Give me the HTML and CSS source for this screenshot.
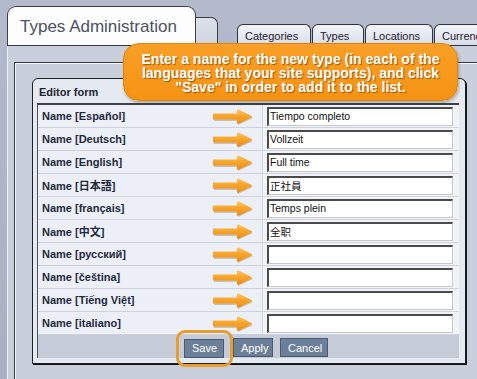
FILE: index.html
```html
<!DOCTYPE html>
<html>
<head>
<meta charset="utf-8">
<link rel="stylesheet" href="styles.css">
</head>
<body>
<svg class="defs" width="0" height="0" aria-hidden="true">
  <defs>
    <linearGradient id="ag" x1="0" y1="0" x2="0" y2="1">
      <stop offset="0" stop-color="#fdc564"/>
      <stop offset="0.45" stop-color="#f7a52c"/>
      <stop offset="1" stop-color="#ec8c0e"/>
    </linearGradient>
    <symbol id="arrow" viewBox="0 0 42 18">
      <path d="M2 7 H26 V3 L41 10 L26 17 V13 H2 Z" fill="#7d6f5a" opacity="0.35"/>
      <path d="M1 5.5 H25 V2 Q25.5 1 26.8 1.6 L39.4 8 Q40.6 8.7 39.4 9.4 L26.8 15.6 Q25.5 16.2 25 15.2 V11.5 H1 Z" fill="url(#ag)"/>
    </symbol>
  </defs>
</svg>
<div class="wrap">
  <div class="tabbar">
    <div class="tab-main">Types Administration</div>
    <div class="tab-blank"></div>
    <div class="tab t-cat">Categories</div>
    <div class="tab t-typ">Types</div>
    <div class="tab t-loc">Locations</div>
    <div class="tab t-cur">Currencies</div>
  </div>
  <div class="panel">
    <div class="outer">
      <div class="editor">
        <div class="editor-head">Editor form</div>
        <div class="grid">
          <div class="row"><div class="lbl"><span>Name [Español]</span><svg class="arr"><use href="#arrow"/></svg></div><div class="val"><div class="inp">Tiempo completo</div></div></div>
          <div class="row"><div class="lbl"><span>Name [Deutsch]</span><svg class="arr"><use href="#arrow"/></svg></div><div class="val"><div class="inp">Vollzeit</div></div></div>
          <div class="row"><div class="lbl"><span>Name [English]</span><svg class="arr"><use href="#arrow"/></svg></div><div class="val"><div class="inp">Full time</div></div></div>
          <div class="row"><div class="lbl"><span>Name [日本語]</span><svg class="arr"><use href="#arrow"/></svg></div><div class="val"><div class="inp cjk">正社員</div></div></div>
          <div class="row"><div class="lbl"><span>Name [français]</span><svg class="arr"><use href="#arrow"/></svg></div><div class="val"><div class="inp">Temps plein</div></div></div>
          <div class="row"><div class="lbl"><span>Name [中文]</span><svg class="arr"><use href="#arrow"/></svg></div><div class="val"><div class="inp cjk sc">全职</div></div></div>
          <div class="row"><div class="lbl"><span>Name [русский]</span><svg class="arr"><use href="#arrow"/></svg></div><div class="val"><div class="inp"></div></div></div>
          <div class="row"><div class="lbl"><span>Name [čeština]</span><svg class="arr"><use href="#arrow"/></svg></div><div class="val"><div class="inp"></div></div></div>
          <div class="row"><div class="lbl"><span>Name [Tiếng Việt]</span><svg class="arr"><use href="#arrow"/></svg></div><div class="val"><div class="inp"></div></div></div>
          <div class="row"><div class="lbl"><span>Name [italiano]</span><svg class="arr"><use href="#arrow"/></svg></div><div class="val"><div class="inp"></div></div></div>
          <div class="btnrow">
            <div class="save-wrap"><button class="btn b-save">Save</button><div class="ring"></div></div>
            <button class="btn b-apply">Apply</button>
            <button class="btn b-cancel">Cancel</button>
          </div>
        </div>
      </div>
    </div>
  </div>
  <div class="callout">Enter a name for the new type (in each of the languages that your site supports), and click "Save" in order to add it to the list.</div>
</div>
</body>
</html>
```
FILE: styles.css
```css
* { box-sizing: border-box; }
html, body { margin: 0; padding: 0; }
body {
  background: linear-gradient(#b3bacb, #a9b0c3);
  font-family: "Liberation Sans", "Noto Sans CJK JP", sans-serif;
  width: 477px;
  height: 379px;
  overflow: hidden;
}
.defs { position: absolute; width: 0; height: 0; }
.wrap {
  position: relative;
  padding: 6px 0 0 7px;
  height: 379px;
  width: 700px;
}
.tabbar {
  display: flex;
  align-items: flex-end;
  height: 40px;
  border-bottom: 1px solid #2f3440;
}
.tab-main {
  width: 189px;
  height: 39px;
  background: #fdfdfe;
  border: 1px solid #3a3f4b;
  border-bottom: none;
  border-radius: 9px 9px 0 0;
  font-size: 17px;
  line-height: 20px;
  padding: 10px 0 0 12px;
  color: #4b5262;
}
.tab-blank {
  width: 22px;
  height: 28px;
  background: linear-gradient(#dde1ea, #cfd4df);
  border: 1px solid #3a3f4b;
  border-left: none;
  border-bottom: none;
  border-radius: 0 7px 0 0;
  margin-right: 19px;
}
.tab {
  height: 21px;
  background: linear-gradient(#f1f3f9, #d9dee9);
  border: 1px solid #30343e;
  border-bottom: none;
  border-radius: 6px 6px 0 0;
  font-size: 11px;
  line-height: 17px;
  padding: 3px 0 0 7px;
  color: #1e2230;
  margin-right: 1px;
  white-space: nowrap;
}
.t-cat { width: 74px; }
.t-typ { width: 52px; }
.t-loc { width: 68px; }
.t-cur { width: 80px; }

.panel {
  background: #c9cfdb;
  border-left: 1px solid #eef1f6;
  padding: 16px 0 0 6px;
  height: 340px;
}
.outer {
  border: 1px solid #353a45;
  border-right: none;
  box-shadow: inset 1px 1px 0 #f4f6fa;
  padding: 15px 0 0 17px;
  height: 340px;
}
.editor {
  width: 434px;
  background: #e5e9f0;
  border: 1px solid #1c2028;
  border-radius: 6px 6px 0 0;
  padding: 0 6px 5px 4px;
  box-shadow: 1px 1px 0 #111;
}
.editor-head {
  height: 24px;
  padding: 2px 0 0 2px;
  line-height: 22px;
  font-size: 11px;
  font-weight: bold;
  color: #1e2636;
}
.grid {
  border-top: 2px solid #3b404b;
  border-left: 1px solid #4a505c;
}
.row {
  display: flex;
  height: 23px;
  border-bottom: 1px solid #cdd2dc;
}
.lbl {
  width: 225px;
  display: flex;
  align-items: center;
  background: #eceff5;
  border-right: 1px solid #d3d8e1;
  padding-left: 4px;
  font-size: 11px;
  font-weight: bold;
  color: #1f2a3d;
}
.lbl span { flex: 1; }
.arr {
  width: 42px;
  height: 18px;
  margin-right: 8px;
  margin-top: 1px;
}
.val {
  flex: 1;
  background: #f1f3f7;
  padding: 2px 0 0 4px;
}
.inp {
  width: 186px;
  height: 19px;
  background: #fff;
  border-style: solid;
  border-width: 2px 1px 1px 2px;
  border-color: #4a4a4a #c8c8c8 #c8c8c8 #4a4a4a;
  font-size: 10.5px;
  line-height: 15px;
  padding-left: 1px;
  color: #111;
  white-space: nowrap;
}
.inp.cjk { font-family: "Noto Sans CJK JP", sans-serif; font-size: 10.5px; }
.inp.sc { font-family: "Noto Sans CJK SC", sans-serif; }

.btnrow {
  display: flex;
  align-items: flex-start;
  height: 23px;
  background: #c5ccd8;
  padding: 3px 0 0 146px;
}
.save-wrap { position: relative; margin-right: 9px; }
.btn {
  height: 19px;
  background: #6c7f99;
  border: 1px solid #4a5a70;
  color: #fff;
  font-family: "Liberation Sans", sans-serif;
  font-size: 11px;
  padding: 0 7px;
  margin: 0;
  line-height: 16px;
}
.b-save { width: 40px; }
.b-apply { width: 40px; margin-right: 7px; }
.b-cancel { width: 48px; }
.ring {
  position: absolute;
  left: -8px;
  top: -8px;
  width: 57px;
  height: 37px;
  border: 3px solid #e99c30;
  border-radius: 9px;
}

.callout {
  position: absolute;
  left: 123px;
  top: 43px;
  width: 335px;
  height: 58px;
  background: linear-gradient(#f99f26, #f59313);
  border: 1px solid #dc8410;
  border-radius: 16px;
  box-shadow: 1px 2px 3px rgba(70, 55, 30, 0.35);
  padding: 8px 10px 0;
  color: #fff;
  font-size: 14px;
  font-weight: bold;
  line-height: 14px;
  text-align: center;
  text-shadow: 1px 1px 1px rgba(130, 65, 0, 0.75);
}
```
